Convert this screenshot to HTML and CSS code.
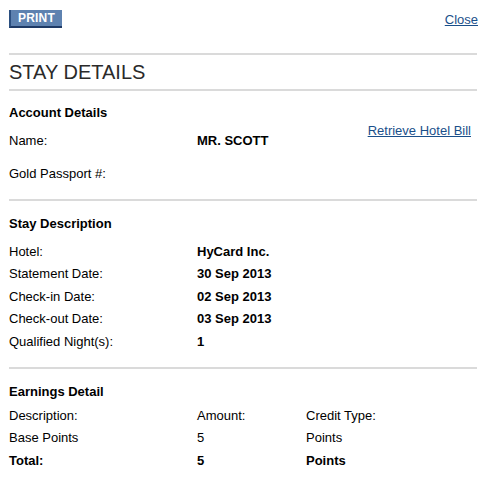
FILE: index.html
```html
<!DOCTYPE html>
<html>
<head>
<meta charset="utf-8">
<link rel="stylesheet" href="styles.css">
</head>
<body>
<div class="page">
  <div class="topbar">
    <span class="print">PRINT</span>
    <a class="close" href="#">Close</a>
  </div>
  <h1 class="title">STAY DETAILS</h1>
  <section class="section account">
    <h2 class="heading">Account Details</h2>
    <a class="bill" href="#">Retrieve Hotel Bill</a>
    <div class="row tall"><span class="label">Name:</span><span class="val b">MR. SCOTT</span></div>
    <div class="row tall"><span class="label">Gold Passport #:</span><span class="val b"></span></div>
  </section>
  <section class="section stay">
    <h2 class="heading">Stay Description</h2>
    <div class="row"><span class="label">Hotel:</span><span class="val b">HyCard Inc.</span></div>
    <div class="row"><span class="label">Statement Date:</span><span class="val b">30 Sep 2013</span></div>
    <div class="row"><span class="label">Check-in Date:</span><span class="val b">02 Sep 2013</span></div>
    <div class="row"><span class="label">Check-out Date:</span><span class="val b">03 Sep 2013</span></div>
    <div class="row"><span class="label">Qualified Night(s):</span><span class="val b">1</span></div>
  </section>
  <section class="section last">
    <h2 class="heading">Earnings Detail</h2>
    <div class="row"><span class="label">Description:</span><span class="val">Amount:</span><span class="val3">Credit Type:</span></div>
    <div class="row"><span class="label">Base Points</span><span class="val">5</span><span class="val3">Points</span></div>
    <div class="row b"><span class="label">Total:</span><span class="val">5</span><span class="val3">Points</span></div>
  </section>
</div>
</body>
</html>
```
FILE: styles.css
```css
html, body { margin: 0; padding: 0; background: #fff; }
body { font-family: "Liberation Sans", Arial, sans-serif; font-size: 13px; color: #000; }
.page { width: 468px; padding: 10px 0 0 9px; }
.topbar { display: flex; justify-content: space-between; align-items: flex-start; height: 43px; border-bottom: 2px solid #dadada; }
.print { display: inline-block; background: #5e82b0; color: #fff; font-weight: bold; font-size: 12px; line-height: 15px; padding: 1px 7px 0 7px; border-left: 2px solid #2b4f80; border-bottom: 2px solid #1e3a66; letter-spacing: 0.2px; }
.close { color: #1a4f8a; text-decoration: underline; font-size: 13px; margin-top: 2px; margin-right: -1px; }
.title { margin: 0; font-weight: normal; font-size: 20px; color: #2a2a2a; line-height: 34px; height: 34px; border-bottom: 2px solid #dadada; }
.section { position: relative; border-bottom: 2px solid #dadada; padding: 15px 0 12px; }
.section.last { border-bottom: none; }
.heading { margin: 0 0 5px; font-size: 13px; font-weight: bold; line-height: 16px; }
.account { padding: 14px 0 9px; }
.account .heading { margin-bottom: 3px; }
.stay { padding-bottom: 14px; }
.stay .heading { margin-bottom: 9px; }
.bill { position: absolute; right: 6px; top: 32px; color: #1a4f8a; text-decoration: underline; }
.row { display: flex; line-height: 22.4px; }
.row.tall { line-height: 33px; }
.label { width: 188px; }
.val { width: 109px; }
.val3 { flex: 1; }
.b { font-weight: bold; }
```
